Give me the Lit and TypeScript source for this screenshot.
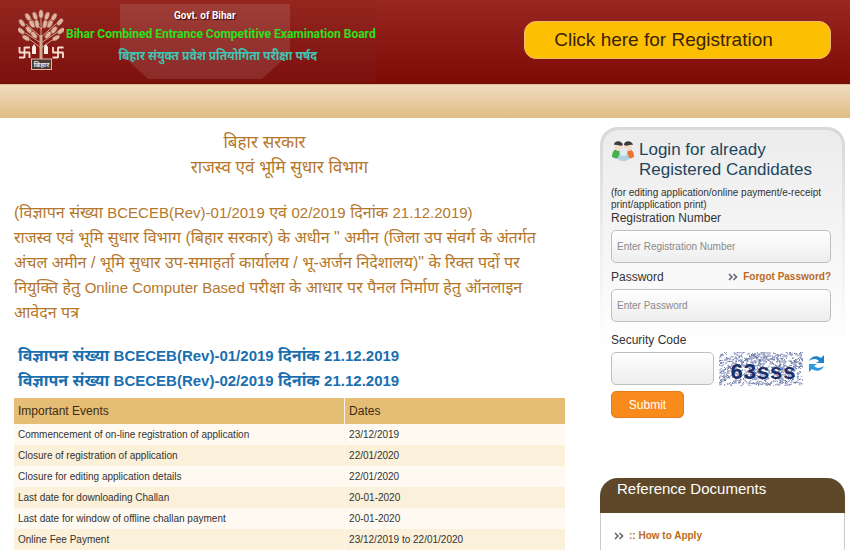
import { LitElement, html, svg, css } from "lit";
import { customElement } from "lit/decorators.js";

const EVENTS: [string, string][] = [
  ["Commencement of on-line registration of application", "23/12/2019"],
  ["Closure of registration of application", "22/01/2020"],
  ["Closure for editing application details", "22/01/2020"],
  ["Last date for downloading Challan", "20-01-2020"],
  ["Last date for window of offline challan payment", "20-01-2020"],
  ["Online Fee Payment", "23/12/2019 to 22/01/2020"],
];

/* leaf: x, y, rotation */
const LEAVES: number[][] = [
  [23, 5, 0], [17, 7, -20], [29, 7, 20], [10, 8, -30], [36, 8, 30],
  [4, 14, -35], [42, 13, 40], [14, 15, -30], [32, 15, 30], [3, 22, -50],
  [43, 22, 55], [11, 21, -40], [36, 21, 40], [19, 15, -12], [27, 15, 12],
  [8, 29, -60], [38, 29, 60], [16, 26, -40], [30, 26, 40],
];

/* small pseudo-random walk used for the captcha speckle */
function noisePath(count: number, seed: number): string {
  let s = seed;
  const next = (n: number) => {
    s = (s * 16807) % 2147483647;
    return s % n;
  };
  let d = "";
  for (let i = 0; i < count; i++) {
    d += `M${next(84)} ${next(34)}l${next(7) - 3} ${next(5) - 2}l${next(5) - 2} ${next(5) - 2}`;
  }
  return d;
}

const emblem = svg`
  <g fill="none" stroke="#d3a893" stroke-width="1">
    <path d="M23 6V50M23 20L13 10M23 20L33 10M23 28L8 15M23 28L39 14M23 34L6 23M23 34L41 22M23 39L10 29M23 39L37 29"/>
    <path d="M23 26V52" stroke-width="3"/>
  </g>
  ${LEAVES.map(([x, y, r]) => svg`<ellipse cx=${x} cy=${y} rx="2.300" ry="4.300" transform="rotate(${r} ${x} ${y})" fill="#e0b3a1" stroke="#8d4636" stroke-width=".6"/>`)}
  <g fill="none" stroke="#f7dfd2" stroke-width="1.8">
    <path d="M6.500 38v11M1 43.500h11M6.500 38.500H12M6.500 48.500H1M1.500 43.500v-5.500M11.500 43.500v5.500"/>
    <path d="M40 38v11M34.500 43.500h11M40 38.500h5.500M40 48.500h-5.500M35 43.500v-5.500M45 43.500v5.500"/>
  </g>
  <path d="M16 35l2 3v7h-4v-7zM28 35l2 3v7h-4v-7z" fill="#fbeadf"/>
  <rect x="13.500" y="50" width="20" height="10.500" fill="#4b3a39" stroke="#e6b5a2"/>
  <text x="23.500" y="58" text-anchor="middle" font-size="7" fill="#f4e4dd" font-weight="700">बिहार</text>`;

@customElement("app-root")
export class AppRoot extends LitElement {
  static styles = css`
    :host {
      display: block;
      min-height: 100vh;
      overflow: hidden;
      background: #fff;
      color: #333;
      font: 10px/12px "Liberation Sans", "Noto Sans", Arial, sans-serif;
    }
    * { box-sizing: border-box; }
    h1, h2, p { margin: 0; font-weight: inherit; }
    a { text-decoration: none; }
    .top {
      display: flex;
      align-items: flex-start;
      justify-content: space-between;
      height: 84px;
      padding-right: 19px;
      background: linear-gradient(#992822, #7e0a04);
      border-bottom: 1px solid #6a1208;
    }
    .brand {
      display: flex;
      height: 83px;
      padding: 9px 0 0 18px;
      background: linear-gradient(#94261f, #7c100d);
      position: relative;
    }
    .shade { position: absolute; left: 120px; top: 4px; }
    .emblem { flex: none; margin-right: 2px; }
    .names { position: relative; text-align: center; font-family: Roboto, "Liberation Sans", "Noto Sans", sans-serif; font-weight: 700; white-space: nowrap; }
    .govt { color: #fff; font-size: 10px; line-height: 14px; text-shadow: 1px 1px 1px #300; padding-right: 32px; }
    .board { color: #2ce01c; font-size: 12px; line-height: 22px; }
    .hindi { color: #3fc4b4; font-size: 12px; line-height: 22px; padding-right: 6px; }
    .register {
      width: 307px;
      height: 38px;
      margin-top: 21px;
      padding: 0 28px 0 0;
      border: 1px solid #f0b96a;
      border-radius: 12px;
      background: #fcbf02;
      color: #3b2208;
      font: 19px/22px "Liberation Sans", sans-serif;
    }
    .band { height: 34px; background: linear-gradient(#f0dcbf, #dfbd85); border-top: 1px solid #e7b894; }
    .page { display: grid; grid-template-columns: minmax(0, 1fr) 245px; column-gap: 35px; padding: 9px 5px 0 14px; }
    .notice { color: #b5772b; font-size: 16px; line-height: 25px; white-space: nowrap; padding-top: 3px; }
    .latin { font-size: 15px; }
    .dept { text-align: center; margin-bottom: 20px; padding-right: 20px; font-size: 17px; }
    .state { padding-right: 30px; }
    .adverts { margin: 18px 0 5px 4px; color: #1a6fb0; font-weight: 700; }
    table { width: 100%; border-collapse: collapse; table-layout: fixed; color: #333; line-height: 12px; white-space: nowrap; }
    th { height: 26px; padding: 0 4px; background: #e5bd74; font-size: 12px; font-weight: 400; text-align: left; color: #3d2c14; }
    th:first-child { width: 60%; }
    td { height: 21px; padding: 0 4px; font-size: 10px; background: #fefaf2; }
    th + th, td + td { border-left: 1px solid #fdf6e8; }
    tr:nth-child(even) td { background: #fbf0d9; }
    .login {
      height: 343px;
      padding: 10px 11px 0 8px;
      border: 3px solid transparent;
      border-top-color: #d9d9d9;
      border-bottom: 0;
      border-radius: 18px 18px 0 0;
      background:
        linear-gradient(#ececec, #f6f6f6 35%, #fff 65%) padding-box,
        linear-gradient(#d6d6d6, #ececec 30%, #fff 65%) border-box;
    }
    .title { display: flex; gap: 4px; color: #1d4560; font-size: 17px; line-height: 20px; }
    .people { flex: none; }
    .hint { margin-top: 7px; white-space: nowrap; }
    label { display: block; font-size: 12px; line-height: 14px; }
    input {
      display: block;
      width: 100%;
      height: 33px;
      padding: 0 5px;
      border: 1px solid #bfbfc2;
      border-radius: 5px;
      background: linear-gradient(#fff, #ededee);
      font: 10px/12px "Liberation Sans", sans-serif;
      color: #333;
    }
    input::placeholder { color: #8a8a8a; opacity: 1; }
    .field { margin-top: 5px; }
    .row { display: flex; justify-content: space-between; align-items: center; margin: 7px 0 5px; }
    .link { display: inline-flex; align-items: center; gap: 5px; color: #b96b22; font-weight: 700; white-space: nowrap; }
    .code { margin: 11px 0 5px; }
    .captcha { display: flex; gap: 5px; align-items: flex-start; }
    .captcha input { width: 103px; flex: none; }
    .captcha svg { flex: none; }
    .refresh { border: 0; padding: 0; margin: 3px 0 0; background: none; height: 18px; }
    .submit { display: block; width: 73px; height: 27px; margin-top: 5px; border: 1px solid #e67c17; border-radius: 5px; background: #f98a1c; color: #fff; font: 12px/14px "Liberation Sans", sans-serif; }
    .docs { margin-top: 8px; border: 1px solid #cfcac2; border-width: 0 1px; border-radius: 18px 18px 0 0; min-height: 72px; }
    .docs h2 { height: 35px; margin: 0 -1px; padding: 1px 17px; border-radius: 18px 18px 0 0; background: #5e4829; color: #fff; font-size: 15px; line-height: 20px; }
    .docs .link { margin: 17px 0 0 13px; }
  `;

  private chevrons() {
    return html`<svg width="10" height="8" viewBox="0 0 10 8" fill="none" stroke="#5f6672" stroke-width="1.6" aria-hidden="true"><path d="M1 1l3 3-3 3M5.500 1l3 3-3 3"/></svg>`;
  }

  private latin(text: string) {
    return html`<span class="latin">${text}</span>`;
  }

  render() {
    return html`
      <header class="top">
        <div class="brand">
          <svg class="shade" width="170" height="76" viewBox="0 0 170 76" aria-hidden="true">
            <path d="M0 0H170V49L142 75H28L0 49Z" fill="#fff" fill-opacity=".11"/>
          </svg>
          <svg class="emblem" width="46" height="62" viewBox="0 0 46 62" role="img" aria-label="Bihar emblem">${emblem}</svg>
          <div class="names">
            <p class="govt">Govt. of Bihar</p>
            <h1 class="board">Bihar Combined Entrance Competitive Examination Board</h1>
            <p class="hindi">बिहार संयुक्त प्रवेश प्रतियोगिता परीक्षा पर्षद</p>
          </div>
        </div>
        <button class="register">Click here for Registration</button>
      </header>
      <div class="band"></div>
      <main class="page">
        <section class="notice">
          <div class="dept">
            <p class="state">बिहार सरकार</p>
            <p>राजस्व एवं भूमि सुधार विभाग</p>
          </div>
          <p>
            (विज्ञापन संख्या ${this.latin("BCECEB(Rev)-01/2019")} एवं ${this.latin("02/2019")} दिनांक ${this.latin("21.12.2019)")}<br />
            राजस्व एवं भूमि सुधार विभाग (बिहार सरकार) के अधीन " अमीन (जिला उप संवर्ग के अंतर्गत<br />
            अंचल अमीन / भूमि सुधार उप-समाहर्ता कार्यालय / भू-अर्जन निदेशालय)" के रिक्त पदों पर<br />
            नियुक्ति हेतु ${this.latin("Online Computer Based")} परीक्षा के आधार पर पैनल निर्माण हेतु ऑनलाइन<br />
            आवेदन पत्र
          </p>
          <div class="adverts">
            ${["01/2019", "02/2019"].map((no) => html`<p>विज्ञापन संख्या ${this.latin(`BCECEB(Rev)-${no}`)} दिनांक ${this.latin("21.12.2019")}</p>`)}
          </div>
          <table>
            <thead><tr><th>Important Events</th><th>Dates</th></tr></thead>
            <tbody>
              ${EVENTS.map(([name, date]) => html`<tr><td>${name}</td><td>${date}</td></tr>`)}
            </tbody>
          </table>
        </section>
        <aside>
          <form class="login" @submit=${(e: Event) => e.preventDefault()}>
            <h2 class="title">
              <svg class="people" width="24" height="22" viewBox="0 0 24 22" aria-hidden="true">
                <path d="M1 17c0-5 2-8 6-8s6 3 6 8c-4 2-8 2-12 0z" fill="#44b04a"/>
                <path d="M11 17c0-5 2-8 6-8s6 3 6 8c-4 2-8 2-12 0z" fill="#ee7335"/>
                <circle cx="8" cy="7" r="4" fill="#f5dcc9"/>
                <circle cx="17" cy="7" r="4" fill="#f5dcc9"/>
                <path d="M3 5C3 0 11 0 12 5 9 7 7 4 3 5zM13 5c0-5 8-5 9 0-4-1-6 2-9 0z" fill="#3c3a3d"/>
                <path d="M7 19c0-4 2-6 5.500-6s5.500 2 5.500 6c-3 3-8 3-11 0z" fill="#b4d3e2"/>
                <circle cx="12.500" cy="12" r="4" fill="#dcebf2"/>
              </svg>
              <span>Login for already<br />Registered Candidates</span>
            </h2>
            <p class="hint">(for editing application/online payment/e-receipt<br />print/application print)</p>
            <label for="reg">Registration Number</label>
            <input class="field" id="reg" type="text" placeholder="Enter Registration Number" />
            <div class="row">
              <label for="pw">Password</label>
              <a class="link" href="#forgot">${this.chevrons()}Forgot Password?</a>
            </div>
            <input id="pw" type="password" placeholder="Enter Password" />
            <label class="code" for="code">Security Code</label>
            <div class="captcha">
              <input id="code" type="text" />
              <svg width="84" height="34" viewBox="0 0 84 34" role="img" aria-label="Security code image">
                <path d=${noisePath(360, 7919)} fill="none" stroke="#65719f" stroke-width=".8"/>
                <path d=${noisePath(140, 4241)} fill="none" stroke="#a9b3d3" stroke-width="1.200"/>
                <text x="11" y="27" font-family="Liberation Mono" font-size="22" font-weight="700" fill="#1c2f6b">63sss</text>
              </svg>
              <button class="refresh" type="button" aria-label="Refresh code">
                <svg width="17" height="17" viewBox="0 0 17 17">
                  <path d="M1 6C3 1 9 0 13 3l3-3v8H8l3-2C8 3 4 4 1 6z" fill="#1d83cf"/>
                  <path d="M16 11c-2 5-8 6-12 3l-3 3V9h8l-3 2c3 3 7 2 10 0z" fill="#2c9ae0"/>
                </svg>
              </button>
            </div>
            <button class="submit">Submit</button>
          </form>
          <section class="docs">
            <h2>Reference Documents</h2>
            <a class="link" href="#apply">${this.chevrons()}:: How to Apply</a>
          </section>
        </aside>
      </main>
    `;
  }
}
